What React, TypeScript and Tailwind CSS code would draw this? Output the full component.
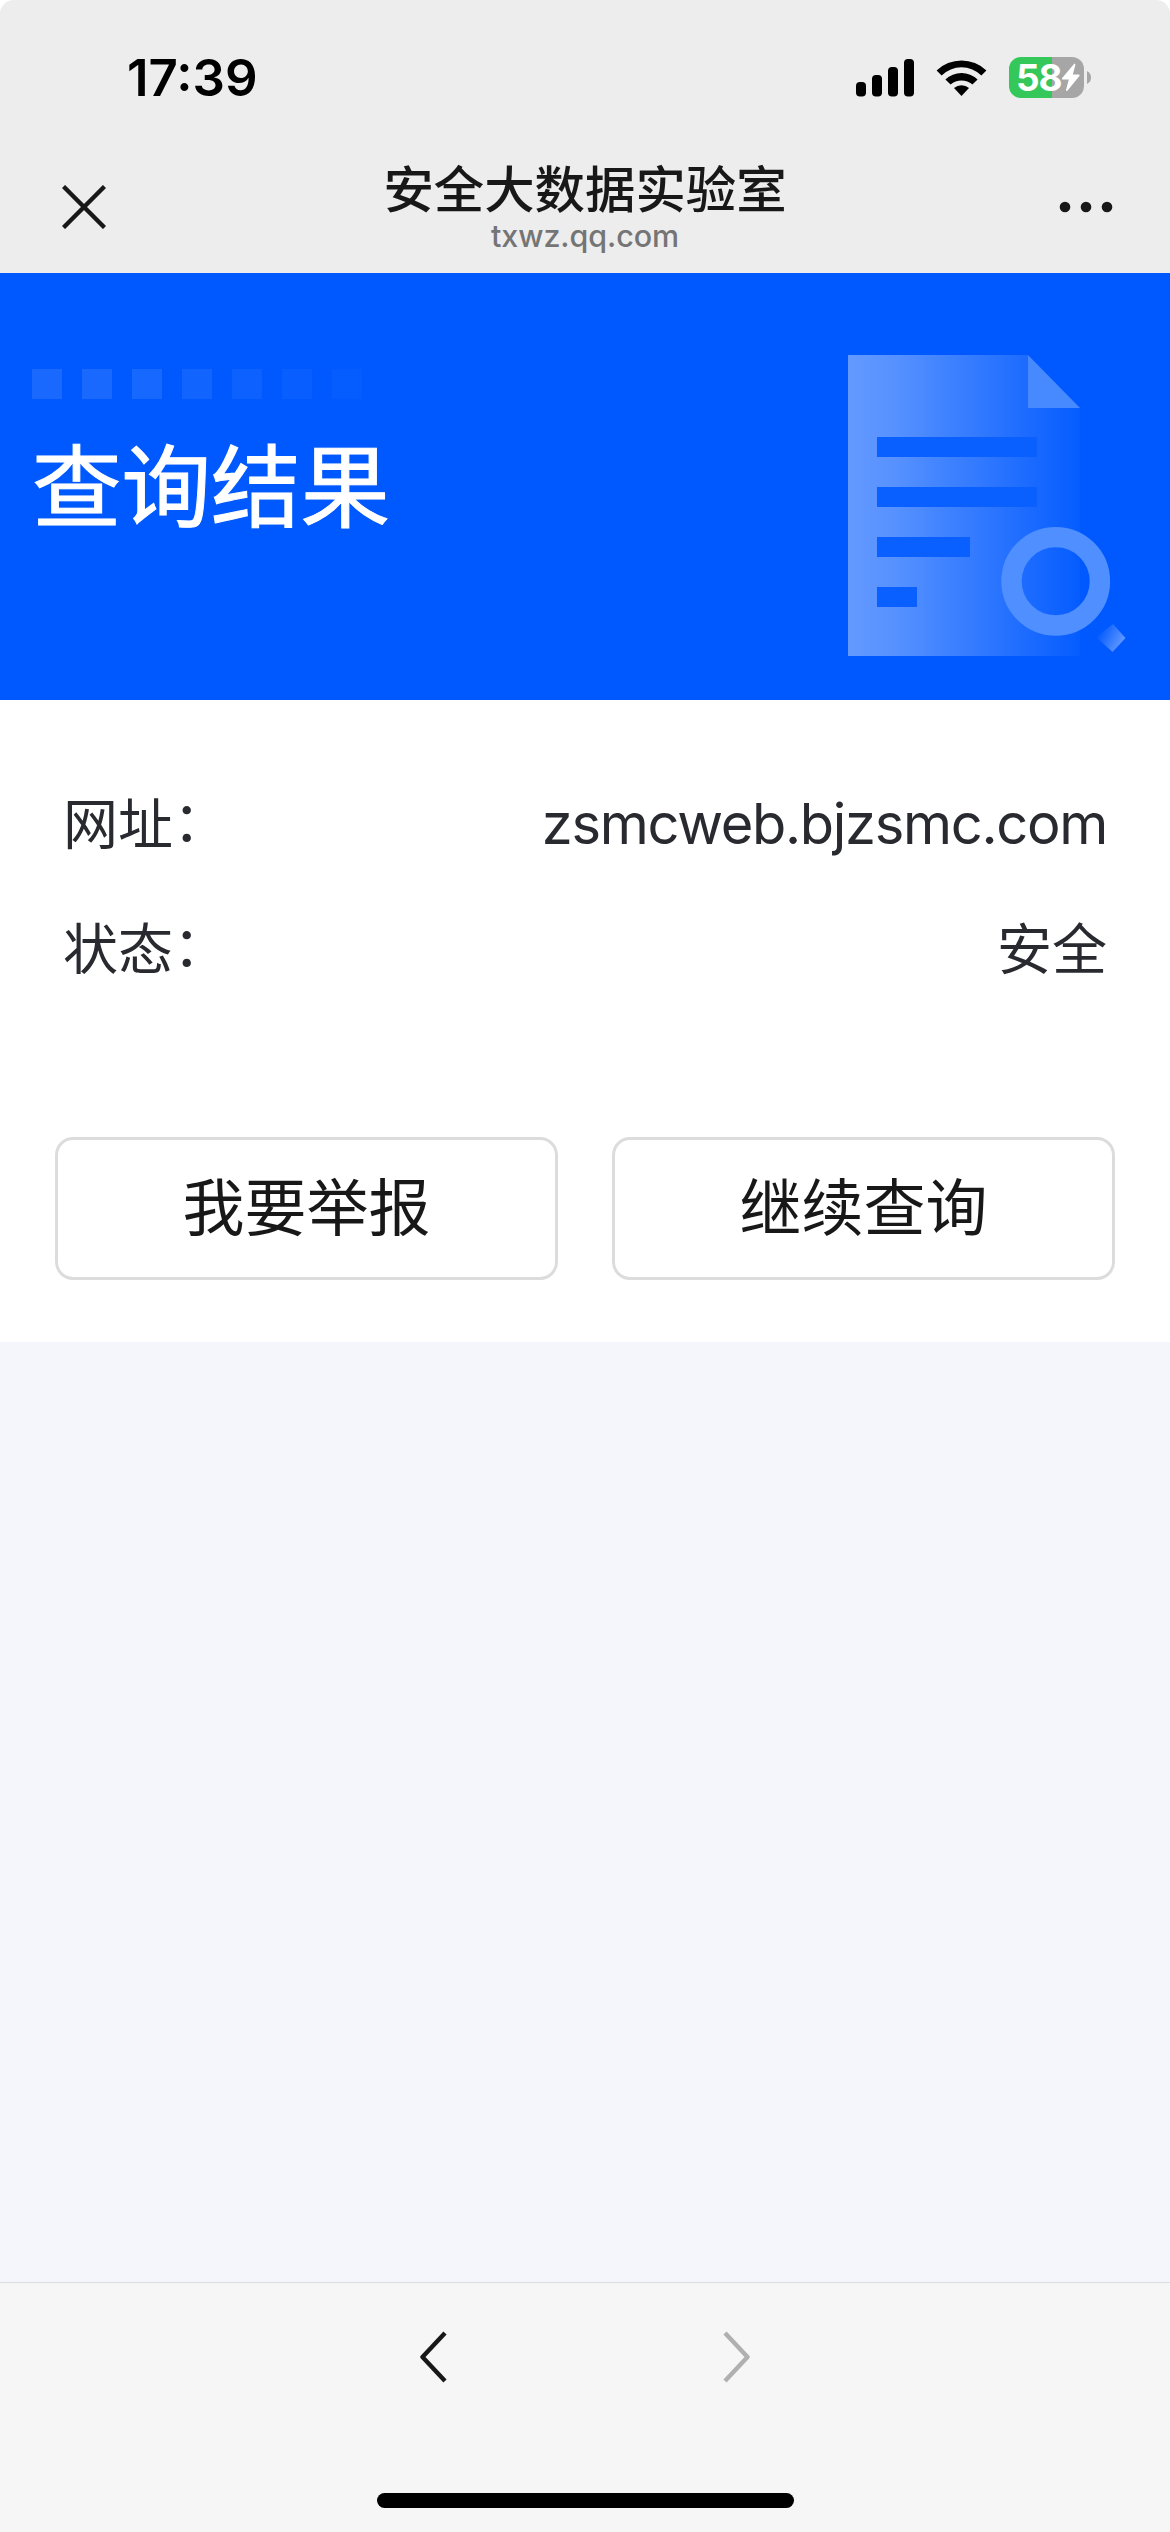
const squares = ["opacity-[0.1]", "opacity-[0.1]", "opacity-[0.09]", "opacity-[0.07]", "opacity-[0.05]", "opacity-[0.03]", "opacity-[0.02]"]

const rows = [
    { label: "网址", value: "zsmcweb.bjzsmc.com", style: "text-[56px] tracking-[-1.3px]" },
    { label: "状态", value: "安全", style: "" },
]

const actions = ["我要举报", "继续查询"]

function SignalIcon() {
    return (
        <svg width="58" height="38" viewBox="0 0 58 38">
            <rect x="0" y="23" width="10" height="14.5" rx="4" />
            <rect x="16" y="16" width="10" height="21.5" rx="4" />
            <rect x="32" y="8" width="10" height="29.5" rx="4" />
            <rect x="48" y="0" width="10" height="37.5" rx="4" />
        </svg>
    )
}

function WifiIcon() {
    return (
        <svg width="52" height="38" viewBox="0 0 52 38">
            <path d="M0.6 11.4 A36 36 0 0 1 50.4 11.4 L45.4 16.4 A28.5 28.5 0 0 0 5.6 16.4 Z" strokeLinejoin="round" />
            <path d="M9.4 20.4 A23.5 23.5 0 0 1 41.6 20.4 L36.4 25.6 A16.2 16.2 0 0 0 14.6 25.6 Z" />
            <path d="M18 29 A11.3 11.3 0 0 1 33 29 L25.5 37 Z" strokeLinejoin="round" />
        </svg>
    )
}

function Battery() {
    return (
        <div className="flex items-center gap-[3px]">
            <div className="flex h-[41px] w-[75px] items-center rounded-[12px] bg-[linear-gradient(90deg,#34c759_57.5%,#a6a6a6_57.5%)] pl-[7px]">
                <span className="w-[43px] text-[37px] leading-none font-bold tracking-[-1.2px] text-white">58</span>
                <svg width="20" height="29" viewBox="0 0 20 29" className="ml-[2px]" fill="#fff">
                    <path d="M13.2 0.8 L1 15.2 Q0.4 16.4 1.8 16.6 L7.8 16.6 L5 27 Q5 28.6 6.4 27.8 L18.6 12.8 Q19 11.6 17.8 11.4 L11.8 11.4 L14.4 1.8 Q14.4 0.2 13.2 0.8 Z" />
                </svg>
            </div>
            <svg width="4" height="13" viewBox="0 0 4 13" fill="#a6a6a6">
                <path d="M0 0 Q4 2 4 6.5 Q4 11 0 13 Z" />
            </svg>
        </div>
    )
}

function ReportIllustration() {
    return (
        <svg width="280" height="304" viewBox="0 0 280 304">
            <defs>
                <linearGradient id="sheet" x1="0" x2="1" y1="0" y2="0">
                    <stop offset="0" stopColor="#fff" stopOpacity="0.39" />
                    <stop offset="0.2" stopColor="#fff" stopOpacity="0.34" />
                    <stop offset="1" stopColor="#fff" stopOpacity="0.02" />
                </linearGradient>
                <linearGradient id="handle" x1="0" x2="1" y1="0.2" y2="0.7">
                    <stop offset="0.1" stopColor="#fff" stopOpacity="0" />
                    <stop offset="1" stopColor="#fff" stopOpacity="0.42" />
                </linearGradient>
            </defs>
            <path d="M0 0 H180 V53 H232 V301 H0 Z" fill="url(#sheet)" />
            <path d="M180 0 L232 53 H180 Z" fill="#478aff" />
            <g fill="#0a60ff">
                <rect x="29" y="82" width="160" height="20" />
                <rect x="29" y="132" width="160" height="20" />
                <rect x="29" y="182" width="93" height="20" />
                <rect x="29" y="232" width="40" height="20" />
            </g>
            <circle cx="207.7" cy="226.3" r="44.2" fill="none" stroke="#4f8fff" strokeWidth="20.4" />
            <path d="M265 269 L277.5 283 L264.5 297 L248 282 Z" fill="url(#handle)" />
        </svg>
    )
}

export default function App() {
    return (
        <div className="flex h-[2532px] w-[1170px] flex-col overflow-hidden bg-white font-['Inter','Noto_Sans_CJK_SC',sans-serif]">
            {/* Status bar + nav bar */}
            <header className="h-[273px] rounded-t-[14px] bg-[#ededed]">
                <div className="flex h-[139px] items-start justify-between pt-[57px] pr-[79px] pl-[127px]">
                    <span className="mt-[-4px] text-[51px] leading-[50px] font-semibold tracking-[0px] text-black">17:39</span>
                    <div className="flex items-start">
                        <div className="mt-[2px]"><SignalIcon /></div>
                        <div className="mt-[2px] ml-[22px]"><WifiIcon /></div>
                        <div className="ml-[21px]"><Battery /></div>
                    </div>
                </div>
                <div className="grid grid-cols-[1fr_auto_1fr] items-start">
                    <svg width="44" height="44" viewBox="0 0 44 44" className="mt-[46px] ml-[62px]" stroke="#181818" strokeWidth="4.4">
                        <path d="M1.5 1.5 L42.5 42.5 M42.5 1.5 L1.5 42.5" />
                    </svg>
                    <div className="flex flex-col items-center pt-[23px]">
                        <h1 className="text-[50.4px] leading-[56px] font-medium text-[#181818]">安全大数据实验室</h1>
                        <p className="mt-[-1px] text-[30.5px] leading-[38px] font-medium tracking-[-0.1px] text-[#757575]">txwz.qq.com</p>
                    </div>
                    <svg width="54" height="12" viewBox="0 0 54 12" className="mt-[62px] mr-[57px] justify-self-end" fill="#181818">
                        <circle cx="6" cy="6" r="5.3" />
                        <circle cx="27" cy="6" r="5.3" />
                        <circle cx="48" cy="6" r="5.3" />
                    </svg>
                </div>
            </header>

            {/* Banner */}
            <section className="flex h-[427px] justify-between bg-[#0059ff] pr-[42px] pl-[32px]">
                <div className="pt-[96px]">
                    <div className="flex gap-[20px]">
                        {squares.map((s, i) => (
                            <div key={i} className={`size-[30px] bg-white ${s}`} />
                        ))}
                    </div>
                    <h2 className="mt-[39px] text-[89.5px] leading-[100px] text-white [-webkit-text-stroke:1px_white]">查询结果</h2>
                </div>
                <div className="pt-[82px]">
                    <ReportIllustration />
                </div>
            </section>

            {/* Result */}
            <section className="h-[642px] bg-white">
                <div className="flex flex-col gap-[45px] pt-[84px] pr-[63px] pl-[63px]">
                    {rows.map((row) => (
                        <div key={row.label} className="flex h-[80px] items-center justify-between text-[55px] leading-[80px] text-[#292a2f]">
                            <span>
                                {row.label}
                                <span className="inline-block -translate-y-[3px]">：</span>
                            </span>
                            <span className={row.style}>{row.value}</span>
                        </div>
                    ))}
                </div>
                <div className="mt-[148px] flex gap-[54px] px-[55px]">
                    {actions.map((text) => (
                        <button key={text} className="h-[143px] flex-1 rounded-[18px] border-[3px] border-[#dcdcdc] text-[62px] leading-none text-[#181818]">
                            {text}
                        </button>
                    ))}
                </div>
            </section>

            <main className="flex-1 bg-[#f4f6fb]" />

            {/* Browser toolbar */}
            <footer className="flex h-[250px] flex-col items-center justify-between border-t border-[#d9dbdf] bg-[#f6f6f6] pt-[48px] pb-[24px]">
                <div className="flex w-[330px] justify-between">
                    <svg width="27" height="52" viewBox="0 0 27 52" fill="none" stroke="#181818" strokeWidth="4.4" strokeLinejoin="round">
                        <path d="M25 2 L2.5 26 L25 50" />
                    </svg>
                    <svg width="27" height="52" viewBox="0 0 27 52" fill="none" stroke="#b0b0b0" strokeWidth="4.4" strokeLinejoin="round">
                        <path d="M2 2 L24.5 26 L2 50" />
                    </svg>
                </div>
                <div className="h-[15px] w-[417px] rounded-full bg-black" />
            </footer>
        </div>
    )
}
